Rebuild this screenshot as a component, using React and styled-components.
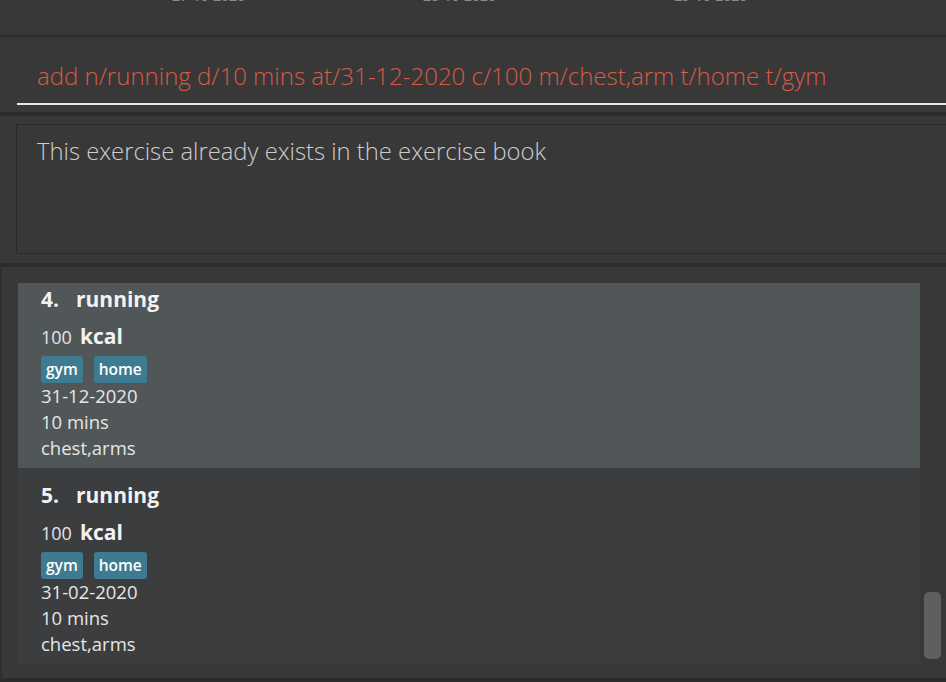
import React from 'react';
import styled, { createGlobalStyle } from 'styled-components';

const GlobalStyle = createGlobalStyle`
  html, body {
    margin: 0;
    padding: 0;
    background: #383838;
  }
`;

// Styled components
const Page = styled.div`
  height: 682px;
  display: flex;
  flex-direction: column;
  background: #383838;
  overflow: hidden;
  font-family: "Open Sans", "Noto Sans", sans-serif;
`;

const TopPanel = styled.div`
  height: 37px;
  flex-shrink: 0;
  box-sizing: border-box;
  overflow: hidden;
  border-bottom: 2px solid #2c2c2c;
`;

const DateRow = styled.div`
  display: flex;
  gap: 178px;
  padding-left: 172px;
  margin-top: -11px;
  height: 14px;
  line-height: 14px;
  font-size: 14px;
  font-weight: 600;
  color: #8c8c8c;
`;

const CommandPanel = styled.div`
  height: 79px;
  flex-shrink: 0;
  padding: 14px 0 0 17px;
  box-sizing: border-box;
  border-bottom: 4px solid #2c2c2c;
`;

const CommandInput = styled.input`
  display: block;
  width: 100%;
  height: 54px;
  box-sizing: border-box;
  padding: 0 0 4px 20px;
  background: transparent;
  border: none;
  border-bottom: 2px solid #e6e6e6;
  outline: none;
  font-family: inherit;
  font-size: 24px;
  font-weight: 300;
  color: #d95a45;
`;

const ResultPanel = styled.div`
  height: 151px;
  flex-shrink: 0;
  box-sizing: border-box;
  padding: 8px 0 9px 16px;
  border-bottom: 4px solid #2c2c2c;
`;

const ResultBox = styled.div`
  height: 100%;
  box-sizing: border-box;
  border: 1px solid #2a2a2a;
  border-right: none;
  padding: 10px 20px;
  font-size: 23.8px;
  font-weight: 300;
  color: #cdcdcd;
`;

const ListPanel = styled.div`
  flex: 1;
  min-height: 0;
  display: flex;
  box-sizing: border-box;
  padding: 16px 0 14px 16px;
  border-left: 2px solid #2e2e2e;
  border-bottom: 4px solid #2c2c2c;
`;

const Viewport = styled.div`
  flex: 1;
  display: flex;
  flex-direction: column;
  justify-content: flex-end;
  overflow: hidden;
`;

const Track = styled.div`
  width: 26px;
  flex-shrink: 0;
  display: flex;
  align-items: flex-end;
  box-sizing: border-box;
  padding: 0 5px 5px 4px;
`;

const Thumb = styled.div`
  width: 17px;
  height: 67px;
  border-radius: 5px;
  background: #5f5f5f;
`;

const Card = styled.div`
  flex-shrink: 0;
  height: 196px;
  box-sizing: border-box;
  padding: 10px 23px 7px;
  background: ${(p) => (p.$selected ? '#515658' : '#3c3d3f')};
  color: #e6e6e6;
`;

const Title = styled.div`
  display: flex;
  gap: 17px;
  height: 34px;
  align-items: center;
  font-size: 21px;
  font-weight: 700;
  color: #f2f2f2;
`;

const CalorieRow = styled.div`
  display: flex;
  align-items: baseline;
  gap: 8px;
  height: 40px;
  line-height: 40px;
  font-size: 18px;
`;

const Unit = styled.span`
  font-size: 21px;
  font-weight: 700;
  color: #f2f2f2;
`;

const Tags = styled.div`
  display: flex;
  gap: 11px;
  height: 27px;
`;

const Tag = styled.span`
  height: 27px;
  line-height: 27px;
  padding: 0 5px;
  border-radius: 3px;
  background: #3e7b91;
  color: #ffffff;
  font-size: 15.5px;
  font-weight: 600;
`;

const Detail = styled.div`
  height: 26px;
  line-height: 26px;
  font-size: 18.5px;
`;

const exercises = [
  { id: 1, name: 'running', calories: 100, tags: ['gym', 'home'], date: '31-10-2020', duration: '10 mins', muscles: 'chest,arms' },
  { id: 2, name: 'running', calories: 100, tags: ['gym', 'home'], date: '31-11-2020', duration: '10 mins', muscles: 'chest,arms' },
  { id: 3, name: 'running', calories: 100, tags: ['gym', 'home'], date: '30-12-2020', duration: '10 mins', muscles: 'chest,arms' },
  { id: 4, name: 'running', calories: 100, tags: ['gym', 'home'], date: '31-12-2020', duration: '10 mins', muscles: 'chest,arms' },
  { id: 5, name: 'running', calories: 100, tags: ['gym', 'home'], date: '31-02-2020', duration: '10 mins', muscles: 'chest,arms' },
];

const ExerciseCard = ({ exercise, selected }) => (
  <Card $selected={selected}>
    <Title>
      <span>{exercise.id}.</span>
      <span>{exercise.name}</span>
    </Title>
    <CalorieRow>
      <span>{exercise.calories}</span>
      <Unit>kcal</Unit>
    </CalorieRow>
    <Tags>
      {exercise.tags.map((t) => (
        <Tag key={t}>{t}</Tag>
      ))}
    </Tags>
    <Detail>{exercise.date}</Detail>
    <Detail>{exercise.duration}</Detail>
    <Detail>{exercise.muscles}</Detail>
  </Card>
);

export default function App() {
  return (
    <>
      <GlobalStyle />
      <Page>
        <TopPanel>
          <DateRow>
            <span>27-10-2020</span>
            <span>28-10-2020</span>
            <span>29-10-2020</span>
          </DateRow>
        </TopPanel>
        <CommandPanel>
          <CommandInput
            readOnly
            value="add n/running d/10 mins at/31-12-2020 c/100 m/chest,arm t/home t/gym"
          />
        </CommandPanel>
        <ResultPanel>
          <ResultBox>This exercise already exists in the exercise book</ResultBox>
        </ResultPanel>
        <ListPanel>
          <Viewport>
            {exercises.map((ex) => (
              <ExerciseCard key={ex.id} exercise={ex} selected={ex.id === 4} />
            ))}
          </Viewport>
          <Track>
            <Thumb />
          </Track>
        </ListPanel>
      </Page>
    </>
  );
}
